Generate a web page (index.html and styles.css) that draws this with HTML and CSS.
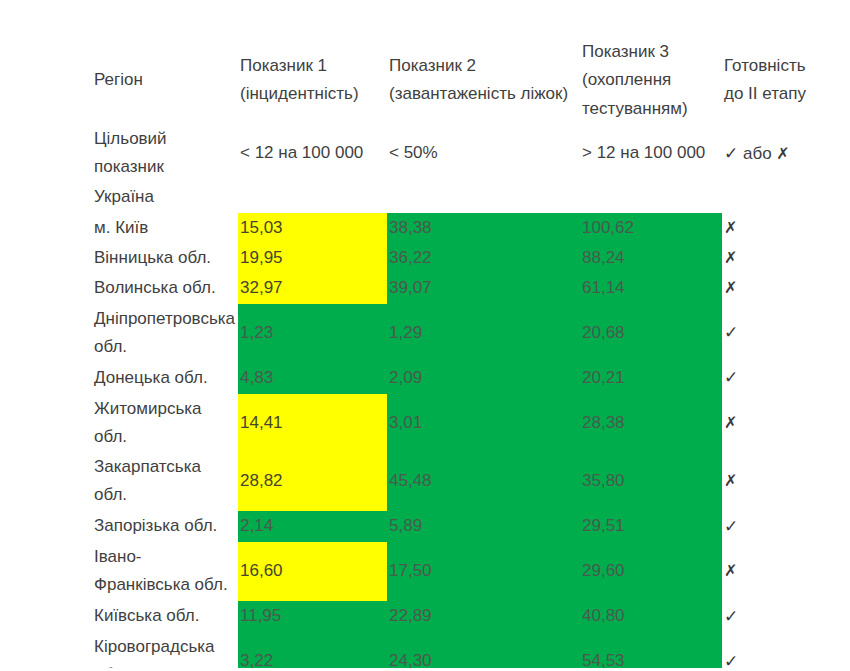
FILE: index.html
```html
<!DOCTYPE html>
<html lang="uk">
<head>
<meta charset="utf-8">
<title>Показники регіонів</title>
<link rel="stylesheet" href="styles.css">
</head>
<body>
<div class="sheet">
<table class="data">
  <colgroup>
    <col class="c-region">
    <col class="c-p1">
    <col class="c-p2">
    <col class="c-p3">
    <col class="c-ready">
  </colgroup>
  <thead>
    <tr>
      <th>Регіон</th>
      <th>Показник 1 (інцидентність)</th>
      <th>Показник 2 (завантаженість ліжок)</th>
      <th>Показник 3 (охоплення тестуванням)</th>
      <th>Готовність до II етапу</th>
    </tr>
  </thead>
  <tbody>
    <tr>
      <td>Цільовий показник</td>
      <td>&lt; 12 на 100 000</td>
      <td>&lt; 50%</td>
      <td>&gt; 12 на 100 000</td>
      <td><span class="ok">✓</span> або <span class="no">✗</span></td>
    </tr>
    <tr>
      <td>Україна</td>
      <td></td><td></td><td></td><td></td>
    </tr>
    <tr>
      <td>м. Київ</td>
      <td class="y">15,03</td><td class="g">38,38</td><td class="g">100,62</td><td><span class="no">✗</span></td>
    </tr>
    <tr>
      <td>Вінницька обл.</td>
      <td class="y">19,95</td><td class="g">36,22</td><td class="g">88,24</td><td><span class="no">✗</span></td>
    </tr>
    <tr>
      <td>Волинська обл.</td>
      <td class="y">32,97</td><td class="g">39,07</td><td class="g">61,14</td><td><span class="no">✗</span></td>
    </tr>
    <tr>
      <td>Дніпропетровська обл.</td>
      <td class="g">1,23</td><td class="g">1,29</td><td class="g">20,68</td><td><span class="ok">✓</span></td>
    </tr>
    <tr>
      <td>Донецька обл.</td>
      <td class="g">4,83</td><td class="g">2,09</td><td class="g">20,21</td><td><span class="ok">✓</span></td>
    </tr>
    <tr>
      <td>Житомирська обл.</td>
      <td class="y">14,41</td><td class="g">3,01</td><td class="g">28,38</td><td><span class="no">✗</span></td>
    </tr>
    <tr>
      <td>Закарпатська обл.</td>
      <td class="y">28,82</td><td class="g">45,48</td><td class="g">35,80</td><td><span class="no">✗</span></td>
    </tr>
    <tr>
      <td>Запорізька обл.</td>
      <td class="g">2,14</td><td class="g">5,89</td><td class="g">29,51</td><td><span class="ok">✓</span></td>
    </tr>
    <tr>
      <td>Івано-Франківська обл.</td>
      <td class="y">16,60</td><td class="g">17,50</td><td class="g">29,60</td><td><span class="no">✗</span></td>
    </tr>
    <tr>
      <td>Київська обл.</td>
      <td class="g">11,95</td><td class="g">22,89</td><td class="g">40,80</td><td><span class="ok">✓</span></td>
    </tr>
    <tr>
      <td>Кіровоградська обл.</td>
      <td class="g">3,22</td><td class="g">24,30</td><td class="g">54,53</td><td><span class="ok">✓</span></td>
    </tr>
  </tbody>
</table>
</div>
</body>
</html>
```

FILE: styles.css
```css
html, body {
  margin: 0;
  padding: 0;
  background: #ffffff;
}

body {
  font-family: "Liberation Sans", Arial, "DejaVu Sans", sans-serif;
  font-size: 17px;
  color: #3f3f3f;
}

.sheet {
  padding-top: 37px;
  height: 631px;
  overflow: hidden;
}

.data {
  table-layout: fixed;
  border-collapse: collapse;
  width: 720px;
  margin-left: 92px;
}

.c-region { width: 146px; }
.c-p1 { width: 149px; }
.c-p2 { width: 193px; }
.c-p3 { width: 142px; }
.c-ready { width: 90px; }

.data th,
.data td {
  padding: 1px 2px;
  line-height: 28.3px;
  text-align: left;
  vertical-align: middle;
  font-weight: normal;
}

.data th {
  color: #3f3f3f;
}

.data td.y {
  background: #ffff00;
  color: #45452f;
}

.data td.g {
  background: #00ad4c;
  color: #4a5a4e;
}

.ok,
.no {
  font-family: "DejaVu Sans", sans-serif;
  color: #3a3a3a;
}

.ok {
  font-size: 17px;
}

.no {
  font-size: 16px;
}
```
